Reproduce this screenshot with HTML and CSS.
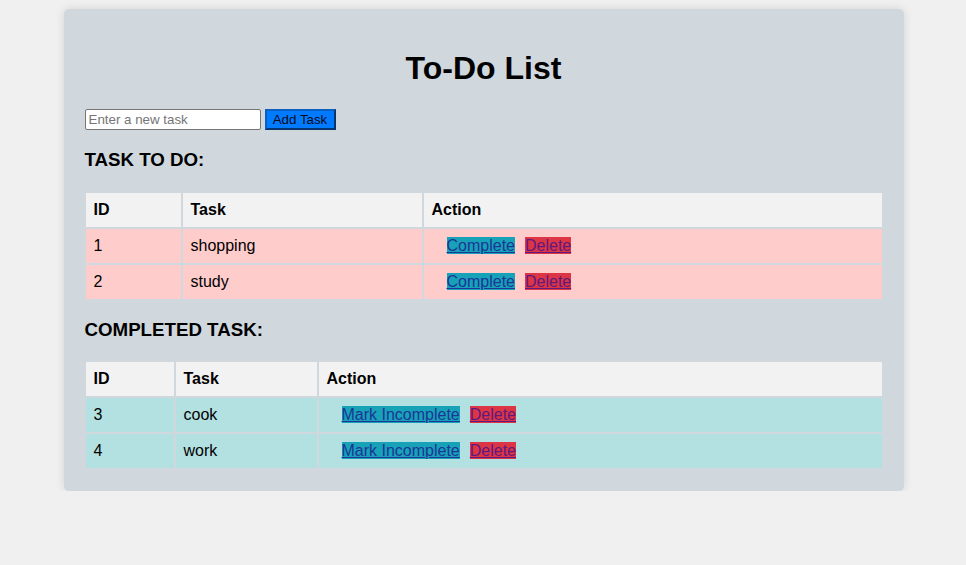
FILE: index.html
```html
<!DOCTYPE html>
<html lang="en">
<head>
<meta charset="utf-8">
<title>To-Do List</title>
<link rel="stylesheet" href="styles.css">
</head>
<body>
<div class="container">
  <h1>To-Do List</h1>
  <div class="add-row">
    <input type="text" class="task-input" placeholder="Enter a new task">
    <button class="add-btn">Add Task</button>
  </div>
  <h3>TASK TO DO:</h3>
  <table class="tbl todo">
    <colgroup><col class="c-id"><col class="c-task"><col></colgroup>
    <thead>
      <tr><th>ID</th><th>Task</th><th>Action</th></tr>
    </thead>
    <tbody>
      <tr><td>1</td><td>shopping</td><td class="actions"><a href="#" class="btn-complete">Complete</a><a href="#" class="btn-delete">Delete</a></td></tr>
      <tr><td>2</td><td>study</td><td class="actions"><a href="#" class="btn-complete">Complete</a><a href="#" class="btn-delete">Delete</a></td></tr>
    </tbody>
  </table>
  <h3>COMPLETED TASK:</h3>
  <table class="tbl done">
    <colgroup><col class="c-id"><col class="c-task"><col></colgroup>
    <thead>
      <tr><th>ID</th><th>Task</th><th>Action</th></tr>
    </thead>
    <tbody>
      <tr><td>3</td><td>cook</td><td class="actions"><a href="#" class="btn-complete">Mark Incomplete</a><a href="#" class="btn-delete">Delete</a></td></tr>
      <tr><td>4</td><td>work</td><td class="actions"><a href="#" class="btn-complete">Mark Incomplete</a><a href="#" class="btn-delete">Delete</a></td></tr>
    </tbody>
  </table>
</div>
</body>
</html>
```

FILE: styles.css
```css
html, body {
  margin: 0;
  padding: 0;
}
body {
  background: #f0f0f0;
  font-family: "Liberation Sans", Arial, sans-serif;
  color: #000;
  padding-left: 1px;
}
.container {
  width: 800px;
  margin: 9px auto 0;
  padding: 20px 20px 21px;
  background: #d0d7dd;
  border-radius: 5px;
  box-shadow: 0 0 10px rgba(0, 0, 0, 0.12);
}
h1 {
  text-align: center;
  font-size: 32px;
  margin: 21.44px 0;
}
.add-row {
  display: flex;
  gap: 4px;
  align-items: flex-start;
}
.task-input {
  box-sizing: border-box;
  width: 176px;
  height: 21px;
  margin: 0 0 0 1px;
  padding: 1px 3px;
  border: 1px solid #767676;
  border-radius: 2px;
  font-family: "Liberation Sans", Arial, sans-serif;
  font-size: 13.33px;
  background: #fff;
}
.task-input::placeholder {
  color: #757575;
}
.add-btn {
  box-sizing: border-box;
  height: 21px;
  width: 71px;
  padding: 1px 4px;
  margin: 0;
  background: #007bff;
  color: #0a0a1a;
  border: 2px outset #0a5fc0;
  font-family: "Liberation Sans", Arial, sans-serif;
  font-size: 13.33px;
}
h3 {
  font-size: 18.72px;
  margin: 18.72px 0 18.72px 1px;
}
.tbl {
  width: 100%;
  border-collapse: separate;
  border-spacing: 2px;
  font-size: 16px;
}
.todo {
  margin-top: 20.72px;
  margin-bottom: -1px;
}
.tbl th, .tbl td {
  padding: 8px;
  text-align: left;
  line-height: 18px;
}
.tbl th {
  background: #f2f2f2;
  font-weight: bold;
}
.todo td {
  background: #ffcccc;
}
.done td {
  background: #b3e0e1;
}
.todo .c-id { width: 95px; }
.todo .c-task { width: 239px; }
.done .c-id { width: 88px; }
.done .c-task { width: 141px; }
.tbl td.actions {
  padding-left: 23px;
}
.actions a {
  text-decoration: underline;
}
.btn-complete {
  background: #17a2b8;
  color: #1c3596;
}
.btn-delete {
  background: #dc3545;
  color: #5f1a7f;
  margin-left: 10px;
}
```
